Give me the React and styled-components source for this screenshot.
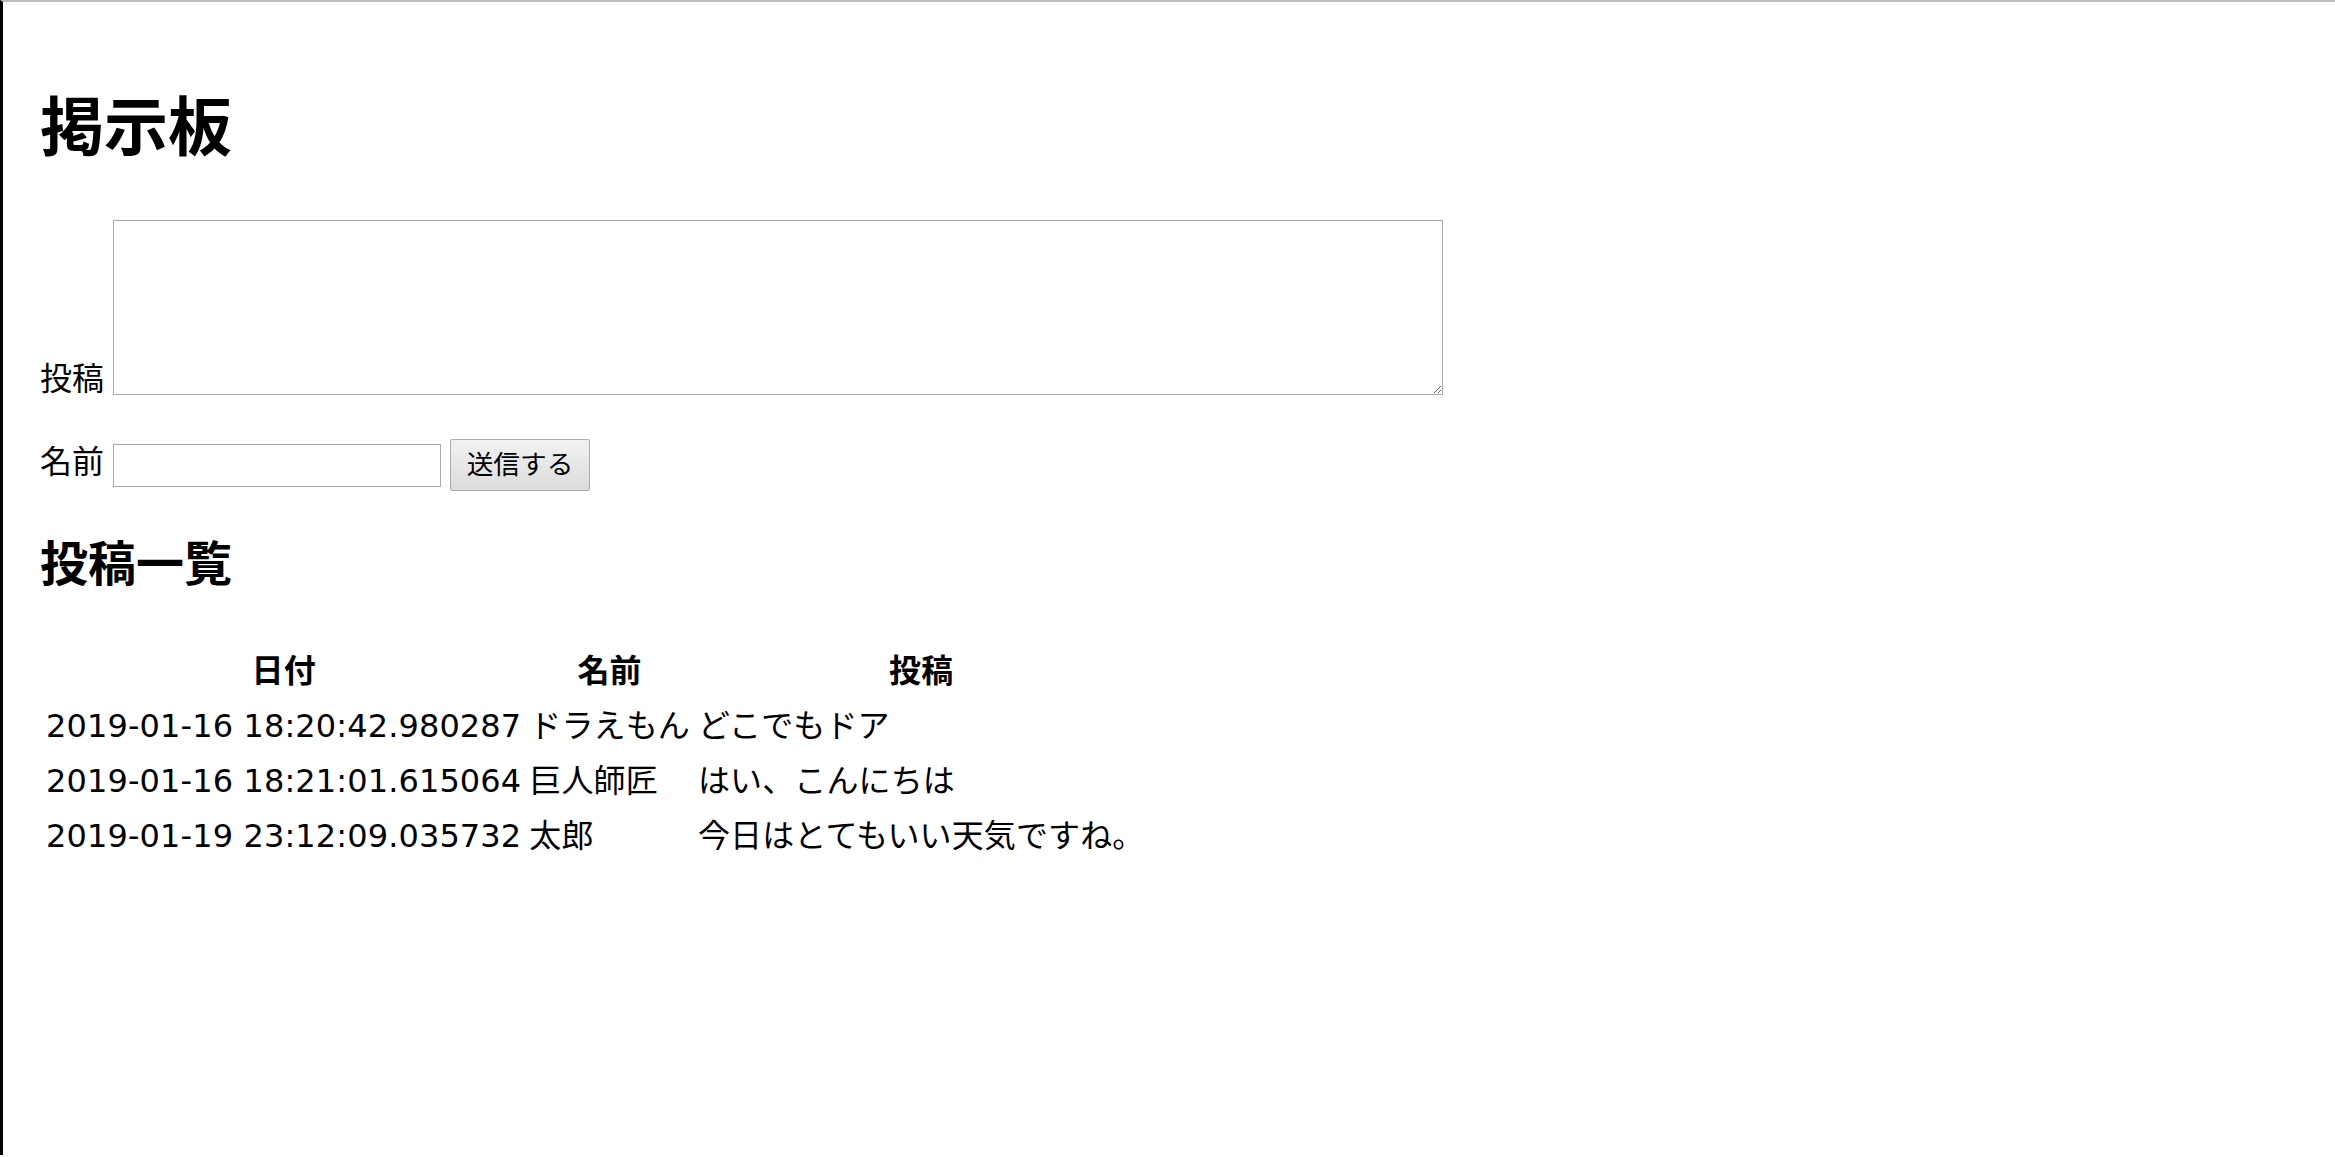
import React from 'react'
import styled, { createGlobalStyle } from 'styled-components'

const GlobalStyle = createGlobalStyle`
    html, body {
        margin: 0;
        padding: 0;
        background: #fff;
    }
    body {
        font-family: "DejaVu Sans", "Noto Sans CJK JP", sans-serif;
        color: #000;
    }
`

const Frame = styled.div`
    min-height: 1155px;
    border-top: 2px solid #bdbdbd;
    border-left: 3px solid #000;
    padding: 90px 0 0 37px;
    box-sizing: border-box;
`

const Title = styled.h1`
    margin: 0;
    font-size: 64px;
    line-height: 72px;
    font-weight: bold;
`

const Form = styled.form`
    display: flex;
    flex-direction: column;
    margin-top: 56px;
    gap: 44px;
`

const Row = styled.div`
    display: flex;
    align-items: ${(p) => (p.$bottom ? 'flex-end' : 'center')};
    gap: 9px;
`

const Label = styled.label`
    font-size: 32px;
    line-height: 32px;
    white-space: nowrap;
    margin-bottom: ${(p) => (p.$raised ? '6px' : '0')};
`

const TextArea = styled.textarea`
    box-sizing: border-box;
    width: 1330px;
    height: 175px;
    margin: 0;
    border: 1px solid #a9a9a9;
    border-radius: 0;
    font-family: "Liberation Mono", monospace;
    font-size: 26px;
    background: #fff;
`

const Input = styled.input`
    box-sizing: border-box;
    width: 328px;
    height: 43px;
    margin: 0;
    border: 1px solid #a9a9a9;
    border-radius: 0;
    font-family: "DejaVu Sans", "Noto Sans CJK JP", sans-serif;
    font-size: 26px;
    background: #fff;
`

const Button = styled.button`
    box-sizing: border-box;
    width: 140px;
    height: 52px;
    margin: 0;
    padding: 0 0 5px;
    border: 1px solid #acacac;
    border-radius: 2px;
    background: linear-gradient(#f2f2f2, #dcdcdc);
    font-family: "Noto Sans CJK JP", sans-serif;
    font-size: 26.67px;
    color: #000;
`

const Subtitle = styled.h2`
    margin: 45px 0 0;
    font-size: 48px;
    line-height: 56px;
    font-weight: bold;
`

const Table = styled.table`
    margin-top: 50px;
    border-collapse: separate;
    border-spacing: 4px;
    font-size: 32px;
    line-height: 47px;
    letter-spacing: 0.12px;
`

const Th = styled.th`
    padding: 2px;
    font-weight: bold;
    text-align: center;
`

const Td = styled.td`
    padding: 2px;
    white-space: nowrap;
`

const posts = [
    { date: '2019-01-16 18:20:42.980287', name: 'ドラえもん', body: 'どこでもドア' },
    { date: '2019-01-16 18:21:01.615064', name: '巨人師匠', body: 'はい、こんにちは' },
    { date: '2019-01-19 23:12:09.035732', name: '太郎', body: '今日はとてもいい天気ですね。' },
]

function App() {
    return (
        <Frame>
            <GlobalStyle />
            <Title>掲示板</Title>
            <Form onSubmit={(e) => e.preventDefault()}>
                <Row $bottom>
                    <Label htmlFor="body">投稿</Label>
                    <TextArea id="body" />
                </Row>
                <Row>
                    <Label htmlFor="name" $raised>名前</Label>
                    <Input id="name" type="text" />
                    <Button type="submit">送信する</Button>
                </Row>
            </Form>
            <Subtitle>投稿一覧</Subtitle>
            <Table>
                <thead>
                    <tr>
                        <Th>日付</Th>
                        <Th>名前</Th>
                        <Th>投稿</Th>
                    </tr>
                </thead>
                <tbody>
                    {posts.map((post) => (
                        <tr key={post.date}>
                            <Td>{post.date}</Td>
                            <Td>{post.name}</Td>
                            <Td>{post.body}</Td>
                        </tr>
                    ))}
                </tbody>
            </Table>
        </Frame>
    )
}

export default App
